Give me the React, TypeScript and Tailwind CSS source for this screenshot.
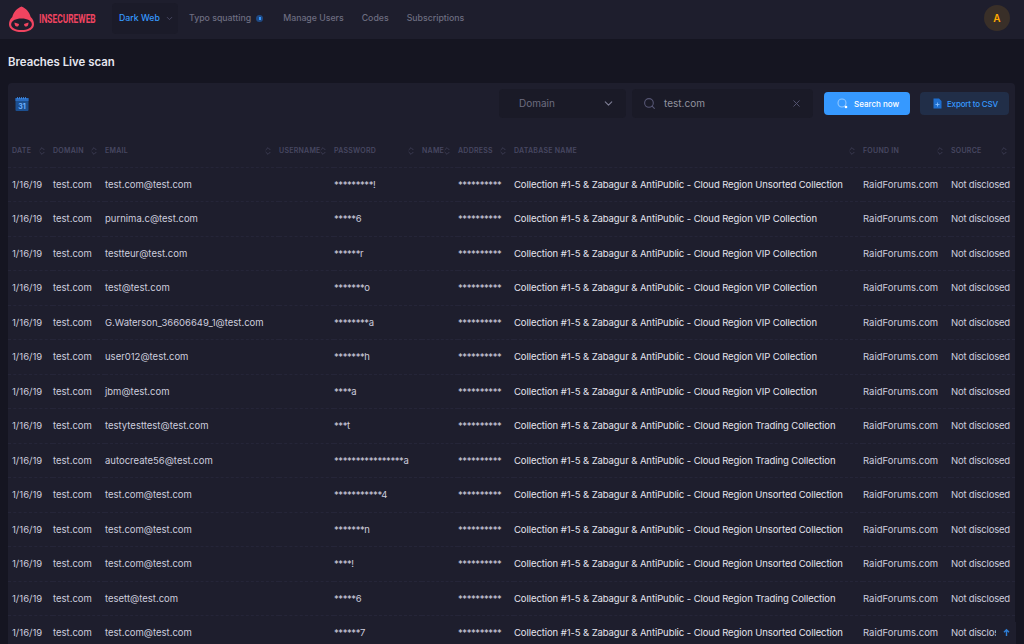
import { ChevronDown, Search, X, ChevronsUpDown } from "lucide-react";

const U = "Collection #1-5 & Zabagur & AntiPublic - Cloud Region Unsorted Collection";
const V = "Collection #1-5 & Zabagur & AntiPublic - Cloud Region VIP Collection";
const T = "Collection #1-5 & Zabagur & AntiPublic - Cloud Region Trading Collection";
const rows: [string, string, string][] = [
  ["test.com@test.com", "*********!", U],
  ["purnima.c@test.com", "*****6", V],
  ["testteur@test.com", "******r", V],
  ["test@test.com", "*******o", V],
  ["G.Waterson_36606649_1@test.com", "********a", V],
  ["user012@test.com", "*******h", V],
  ["jbm@test.com", "****a", V],
  ["testytesttest@test.com", "***t", T],
  ["autocreate56@test.com", "****************a", T],
  ["test.com@test.com", "***********4", U],
  ["test.com@test.com", "*******n", U],
  ["test.com@test.com", "****!", U],
  ["tesett@test.com", "*****6", T],
  ["test.com@test.com", "******7", U],
];
const heads = ["DATE", "DOMAIN", "EMAIL", "USERNAME", "PASSWORD", "NAME", "ADDRESS", "DATABASE NAME", "FOUND IN", "SOURCE"];
const widths = ["w-[45px]", "w-[52px]", "w-[174px]", "w-[55px]", "w-[88px]", "w-[36px]", "w-[56px]", "w-[349px]", "w-[88px]", "w-[64px]"];

function Logo() {
  return (
    <div className="mt-[2px] flex items-center gap-[4px]">
      <svg width="27" height="27" viewBox="0 0 27 27">
        <path d="M13.5 0.5C9 2.2 5.5 6 4.3 11C2.2 13 1 15.5 1 18.2 1 23 6 26 13.5 26S26 23 26 18.2C26 15.5 24.8 13 22.7 11C21.5 6 18 2.2 13.5 0.5Z" fill="#f04460" />
        <path d="M13.5 12.6C7.5 12.6 3.2 14.8 3.2 18.5 3.2 22 7.5 24 13.5 24S23.8 22 23.8 18.5C23.8 14.8 19.5 12.6 13.5 12.6Z" fill="#1e1e2d" />
        <path d="M6.5 16.5 11 18c0 1.6-1 2.6-2.2 2.6-1.4 0-2.4-1.8-2.3-4.1ZM20.5 16.5 16 18c0 1.6 1 2.6 2.2 2.6 1.4 0 2.4-1.8 2.3-4.1Z" fill="#f04460" />
      </svg>
      <div className="w-[58px]">
        <span className="block origin-left scale-x-[0.67] whitespace-nowrap font-['Roboto'] text-[12.5px] font-bold leading-none text-[#f04460]">INSECUREWEB</span>
      </div>
    </div>
  );
}

function NavItem({ label, className }: { label: string; className: string }) {
  return <span className={`text-[8.75px] font-medium leading-[12px] text-[#6d6d80] ${className}`}>{label}</span>;
}

function SortIcon() {
  return <ChevronsUpDown className="absolute right-[6px] top-[12px] text-[#474761]" size={10} strokeWidth={1.6} />;
}

export default function App() {
  return (
    <div className="relative h-[644px] w-[1024px] overflow-hidden bg-[#151521] font-['Inter',sans-serif]">
      <header className="flex h-[39px] items-center bg-[#1e1e2d] pb-[3px] pl-[8px] pr-[14px]">
        <Logo />
        <nav className="ml-[15px] flex items-center">
          <div className="flex h-[31px] w-[66px] items-center gap-[5px] rounded bg-[#1b1b29] pl-[7px]">
            <span className="text-[8.75px] font-medium leading-[12px] text-[#3699ff]">Dark Web</span>
            <ChevronDown size={9} className="text-[#565674]" />
          </div>
          <NavItem label="Typo squatting" className="ml-[11px]" />
          <span className="ml-[5px] flex h-[7px] w-[7px] items-center justify-center rounded-full bg-[#1f4a85]">
            <span className="h-[3px] w-[2px] bg-[#3699ff]" />
          </span>
          <NavItem label="Manage Users" className="ml-[20px]" />
          <NavItem label="Codes" className="ml-[18px]" />
          <NavItem label="Subscriptions" className="ml-[18px]" />
        </nav>
        <div className="ml-auto flex h-[26px] w-[26px] items-center justify-center rounded-full bg-[#392f28] text-[10px] font-semibold text-[#ffa800]">A</div>
      </header>

      <h1 className="ml-[8px] mt-[16px] text-[11.4px] font-semibold leading-[14px] text-[#e6e6ef]">Breaches Live scan</h1>

      <main className="ml-[8px] mt-[14px] w-[1007px] rounded bg-[#1e1e2d]">
        <div className="mb-[10px] flex h-[41px] items-center pl-[7px] pr-[6px]">
          <svg width="14" height="14" viewBox="0 0 14 14">
            <rect x="0.5" y="1" width="13" height="13" rx="1" fill="#1c4f8f" />
            <rect x="0.5" y="1" width="13" height="3" fill="#2a6cc0" />
            <path d="M2.5 0v2M4.5 0v2M6.5 0v2M8.5 0v2M10.5 0v2" stroke="#3f8be6" strokeWidth="0.8" />
            <text x="7" y="11.5" textAnchor="middle" fontSize="7" fontWeight="700" fill="#6db0ff" fontFamily="Inter">31</text>
          </svg>
          <div className="ml-auto flex h-[29px] w-[127px] items-center justify-between rounded-sm bg-[#1a1a27] pl-[20px] pr-[11px]">
            <span className="text-[10px] text-[#6d6d80]">Domain</span>
            <ChevronDown size={13} className="text-[#7e7e95]" />
          </div>
          <div className="ml-[6px] flex h-[29px] w-[181px] items-center rounded-sm bg-[#1a1a27] pl-[11px] pr-[11px]">
            <Search size={13} className="text-[#565674]" />
            <span className="ml-[8px] text-[10px] text-[#92929f]">test.com</span>
            <X size={11} className="ml-auto text-[#565674]" />
          </div>
          <button className="ml-[11px] flex h-[23px] w-[86px] items-center gap-[6px] rounded bg-[#3699ff] pl-[13px] text-[8px] font-medium text-white">
            <svg width="11" height="11" viewBox="0 0 11 11">
              <circle cx="5" cy="5" r="4" fill="none" stroke="#a6d3ff" strokeWidth="1.1" opacity="0.8" />
              <circle cx="9" cy="9" r="1.3" fill="#ffffff" />
            </svg>
            Search now
          </button>
          <button className="ml-[10px] flex h-[23px] w-[89px] items-center gap-[5px] rounded bg-[#212e48] pl-[13px] text-[8px] font-medium tracking-[-0.2px] text-[#3699ff]">
            <svg width="9" height="11" viewBox="0 0 9 11">
              <path d="M0.5 0.5H6L8.5 3V10.5H0.5Z" fill="#1f6fcf" />
              <path d="M4.5 4.5v4M2.5 6.5h4" stroke="#7fbcff" strokeWidth="0.9" />
            </svg>
            Export to CSV
          </button>
        </div>

        <table className="w-[1007px] table-fixed border-collapse">
          <colgroup>
            {widths.map((w) => <col key={w} className={w} />)}
          </colgroup>
          <thead>
            <tr className="h-[33px] border-b border-dashed border-[#252538]">
              {heads.map((h, i) => (
                <th key={h} className={`relative whitespace-nowrap pt-[1px] text-left align-middle text-[7px] font-semibold tracking-[0.25px] text-[#474761] ${i === 0 ? "pl-[4px]" : ""}`}>
                  {h}
                  <SortIcon />
                </th>
              ))}
            </tr>
          </thead>
          <tbody>
            {rows.map((r, i) => (
              <tr key={i} className="h-[34.5px] border-b border-dashed border-[#252538] text-[9.5px] text-[#cdcdde]">
                <td className="whitespace-nowrap pl-[4px] pt-[1px]">1/16/19</td>
                <td className="whitespace-nowrap pt-[1px]">test.com</td>
                <td className="whitespace-nowrap pt-[1px]">{r[0]}</td>
                <td />
                <td className="whitespace-nowrap pt-[1px] tracking-[-0.42px]">{r[1]}</td>
                <td />
                <td className="whitespace-nowrap pt-[1px] tracking-[-0.42px]">**********</td>
                <td className="whitespace-nowrap pt-[1px] tracking-[-0.08px] text-[#e4e4ee]">{r[2]}</td>
                <td className="whitespace-nowrap pt-[1px]">RaidForums.com</td>
                <td className="whitespace-nowrap pt-[1px] tracking-[-0.2px]">Not disclosed</td>
              </tr>
            ))}
          </tbody>
        </table>
      </main>
      <div className="absolute left-[996px] top-[622px] flex h-[22px] w-[20px] items-start justify-center bg-[#1e1e2d] pt-[6px]">
        <svg width="9" height="9" viewBox="0 0 9 9"><path d="M4.5 8V2M2 4.2 4.5 1.7 7 4.2" fill="none" stroke="#2f7fd6" strokeWidth="1.4" /></svg>
      </div>
    </div>
  );
}
